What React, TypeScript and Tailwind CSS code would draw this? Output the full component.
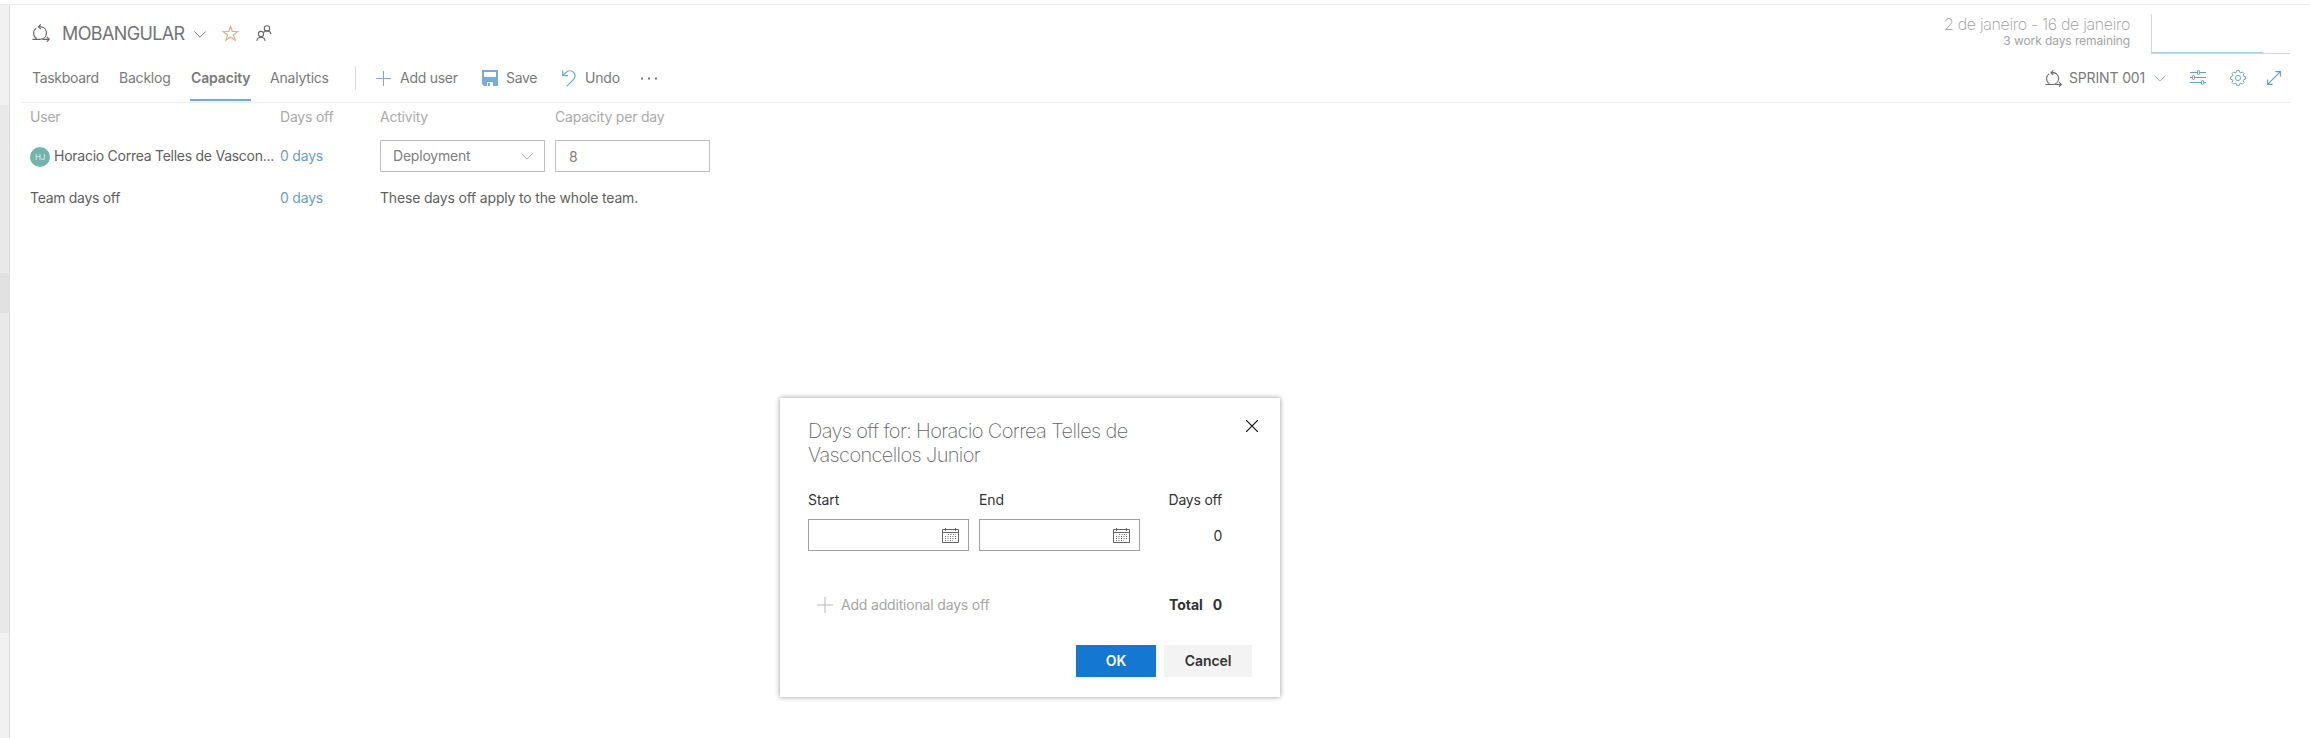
import React from "react";

type IconProps = { className?: string };

function SprintIcon({ className }: IconProps) {
  return (
    <svg viewBox="0 0 18 18" fill="none" stroke="currentColor" strokeWidth="1.15" className={className}>
      <path d="M0.5 15.3H8.5A6.3 6.3 0 0 0 9.2 2.8H6.6M4.6 14.6A6.3 6.3 0 0 1 4.3 4.1" />
      <path d="M8.8 0.4L6.4 2.8L8.8 5.2M10.5 15.3H17.2M14.8 12.9L17.2 15.3L14.8 17.7" />
    </svg>
  );
}

function Chevron({ className }: IconProps) {
  return (
    <svg viewBox="0 0 12 7" fill="none" stroke="currentColor" className={className}>
      <path d="M0.4 0.5L6 6.1L11.6 0.5" />
    </svg>
  );
}

function Star() {
  return (
    <svg viewBox="0 0 17 17" fill="none" stroke="currentColor" strokeWidth="1.2" className="size-[17px] text-[#e9ac88]">
      <path d="M8.5 1.2L10.3 6.5H16L11.4 9.8L13.1 15.2L8.5 11.9L3.9 15.2L5.6 9.8L1 6.5H6.7Z" />
    </svg>
  );
}

function People() {
  return (
    <svg viewBox="0 0 16 17" fill="none" stroke="currentColor" strokeWidth="1.1" className="h-[17px] w-4 text-[#666]">
      <circle cx="5" cy="9" r="2.6" />
      <circle cx="11" cy="3.4" r="2.7" />
      <path d="M0.8 15.8A4.2 4.2 0 0 1 9.1 15.8M7.8 7.4A4.1 4.1 0 0 1 15.1 9.2" />
    </svg>
  );
}

function Plus({ className }: IconProps) {
  return (
    <svg viewBox="0 0 16 16" fill="none" stroke="currentColor" className={className}>
      <path d="M8 0V16M0 8H16" />
    </svg>
  );
}

function SaveIcon() {
  return (
    <svg viewBox="0 0 16 16" className="size-4 text-[#78abdb]" fill="currentColor">
      <path fillRule="evenodd" d="M0 0H16V16H12V12H4V16H2L0 14ZM2 2V7H14V2Z" />
      <path d="M6 13H8V16H6ZM11 12H12V16H11ZM4 12H5V16H4Z" />
    </svg>
  );
}

function UndoIcon() {
  return (
    <svg viewBox="0 0 14 17" fill="none" stroke="currentColor" strokeWidth="1.2" className="h-[17px] w-3.5 text-[#6fa5d6]">
      <path d="M0.7 0.5V5.6H6M0.9 5.4L4.2 2.2C6.3 0.2 9.7 0.4 11.5 2.2C13.6 4.2 13.5 7.4 11.6 9.4L4.8 16.2" />
    </svg>
  );
}

function Sliders() {
  return (
    <svg viewBox="0 0 16 16" fill="none" stroke="currentColor" className="size-4 text-[#65a0d0]">
      <path d="M0 2.5H7.5M9.5 2.5H16M0 7.5H2.5M4.5 7.5H16M0 12.5H11.5M13.5 12.5H16" />
      <rect x="7.5" y="0.5" width="2" height="4" rx="0.7" />
      <rect x="2.5" y="5.5" width="2" height="4" rx="0.7" />
      <rect x="11.5" y="10.5" width="2" height="4" rx="0.7" />
    </svg>
  );
}

function Gear() {
  return (
    <svg viewBox="0 0 16 16" fill="none" stroke="currentColor" strokeLinejoin="round" className="size-4 text-[#72a7d3]">
      <circle cx="8" cy="8" r="2.6" />
      <path d="M6.7 0.6H9.3L9.6 2.3L10.9 2.9L12.4 1.9L14.1 3.6L13.1 5.1L13.7 6.4L15.4 6.7V9.3L13.7 9.6L13.1 10.9L14.1 12.4L12.4 14.1L10.9 13.1L9.6 13.7L9.3 15.4H6.7L6.4 13.7L5.1 13.1L3.6 14.1L1.9 12.4L2.9 10.9L2.3 9.6L0.6 9.3V6.7L2.3 6.4L2.9 5.1L1.9 3.6L3.6 1.9L5.1 2.9L6.4 2.3Z" />
    </svg>
  );
}

function Expand() {
  return (
    <svg viewBox="0 0 14 14" fill="none" stroke="currentColor" strokeWidth="1.1" className="size-3.5 text-[#5f9dcd]">
      <path d="M0.8 13.2L13.2 0.8M8.4 0.6H13.4V5.6M0.6 8.4V13.4H5.6" />
    </svg>
  );
}

function Calendar() {
  return (
    <svg viewBox="0 0 17 15" fill="none" stroke="currentColor" className="h-[15px] w-[17px] text-[#666]">
      <path d="M0.5 1.5H16.5V14.5H0.5ZM0.5 4.5H16.5M3.5 0V3M13.5 0V3" />
      <path d="M6 6.5H14M3 8.5H14M3 10.5H14M3 12.5H11" strokeDasharray="1 1.5" />
    </svg>
  );
}

function DateField({ label }: { label: string }) {
  return (
    <div className="w-[161px]">
      <div className="h-[29px] leading-5 tracking-[-0.05px]">{label}</div>
      <div className="flex h-8 items-center justify-end border border-[#a0a0a0] pr-[9px]">
        <Calendar />
      </div>
    </div>
  );
}

function DaysOffDialog() {
  return (
    <div
      role="dialog"
      className="absolute top-[398px] left-[780px] h-[299px] w-[500px] bg-white px-7 text-[#333] shadow-[0_0_5px_rgba(0,0,0,0.42)]"
    >
      <div className="flex h-[92px] justify-between pt-[21px]">
        <h2 className="w-[340px] text-[20px] leading-6 font-extralight tracking-[-0.63px] text-[#666]">
          Days off for: Horacio Correa Telles de Vasconcellos Junior
        </h2>
        <svg viewBox="0 0 12 12" stroke="#111" strokeWidth="1.2" className="mt-px mr-[-6px] size-3">
          <path d="M0 0L12 12M12 0L0 12" />
        </svg>
      </div>
      <div className="flex">
        <DateField label="Start" />
        <div className="w-2.5" />
        <DateField label="End" />
        <div className="flex flex-1 flex-col items-end pr-[30px] leading-5">
          <span>Days off</span>
          <span className="mt-4">0</span>
        </div>
      </div>
      <div className="mt-11 flex h-5 items-center leading-5">
        <Plus className="ml-[9px] size-4 text-[#b8b8b8]" />
        <span className="ml-2 tracking-[-0.18px] text-[#a6a6a6]">Add additional days off</span>
        <span className="ml-auto font-bold tracking-[-0.02px]">Total</span>
        <span className="ml-2.5 pr-[30px] font-bold">0</span>
      </div>
      <div className="mt-[30px] flex justify-end gap-2 leading-5 font-semibold tracking-[-0.1px]">
        <button className="h-8 w-20 bg-[#1478d2] pb-px text-white">OK</button>
        <button className="h-8 w-[88px] bg-[#f3f3f3] pb-px">Cancel</button>
      </div>
    </div>
  );
}

export default function App() {
  return (
    <div className="relative flex h-[738px] w-[2310px] flex-col overflow-hidden bg-white pt-1 font-['Inter','Liberation_Sans',sans-serif] text-[14px] tracking-[-0.21px] text-[#737373]">
      <div className="h-px shrink-0 bg-[#ececec]" />
      <div className="flex flex-1">
        <aside className="flex w-2.5 shrink-0 flex-col border-r border-[#dedede] bg-[#f1f1f1]">
          <div className="h-[100px]" />
          <div className="h-[168px] bg-[#e9e9e9]" />
          <div className="h-10 rounded-r-xs bg-[#e1e1e1]" />
          <div className="h-80 bg-[#e9e9e9]" />
        </aside>

        <main className="flex-1 pr-5 pl-3">
          <header className="flex h-[55px]">
            <div className="flex h-14 items-center pl-2.5">
              <SprintIcon className="size-[18px] text-[#666]" />
              <h1 className="ml-3 w-[125px] pt-0.5 text-[18px] leading-6 tracking-[-0.62px]">MOBANGULAR</h1>
              <Chevron className="mt-[3px] ml-[7px] h-[7px] w-3 text-[#777]" />
              <div className="ml-4">
                <Star />
              </div>
              <div className="ml-[17px]">
                <People />
              </div>
            </div>
            <div className="ml-auto pt-[9px] text-right">
              <div className="h-[18px] text-[16px] leading-5 font-extralight tracking-[-0.31px] text-[#999]">2 de janeiro - 16 de janeiro</div>
              <div className="text-[12px] leading-[18px] tracking-[-0.09px] text-[#a3a3a3]">3 work days remaining</div>
            </div>
            <div className="mt-[9px] ml-[21px] flex h-10 w-[139px] items-end border-b border-l border-[#d6d6d6]">
              <div className="h-px w-[111px] bg-[#a6d0f3]" />
            </div>
          </header>

          <nav className="flex h-[43px] items-center border-b border-[#ececec] pb-1.5 leading-5 text-[#7a7a7a]">
            <span className="ml-2.5 w-[87px] tracking-[-0.3px]">Taskboard</span>
            <span className="w-[71px]">Backlog</span>
            <span className="relative w-[61px] pl-px font-semibold tracking-[-0.15px]">
              Capacity
              <span className="absolute top-[31px] left-0 h-0.5 w-[61px] bg-[#6aaee4]" />
            </span>
            <span className="ml-[19px]">Analytics</span>
            <span className="absolute top-[66px] left-[355px] h-6 w-px bg-[#dcdcdc]" />
            <span className="absolute top-[70px] left-[376px] flex h-4 items-center">
              <Plus className="size-[15px] text-[#6fa5d6]" />
              <span className="ml-[9px] w-[82px] tracking-[-0.26px]">Add user</span>
              <SaveIcon />
              <span className="ml-2 w-14 tracking-[-0.35px]">Save</span>
              <UndoIcon />
              <span className="ml-[9px] w-[55px]">Undo</span>
              <svg viewBox="0 0 18 3" className="h-[3px] w-[18px]" fill="#777">
                <path d="M1 .5h2v2H1zM8 .5h2v2H8zM15 .5h2v2h-2z" />
              </svg>
            </span>
            <div className="mr-[9px] ml-auto flex items-center">
              <SprintIcon className="size-[17px] text-[#666]" />
              <span className="ml-[7px] w-[85px] tracking-[-0.15px]">SPRINT 001</span>
              <Chevron className="h-[7px] w-3 text-[#aaa]" />
              <span className="ml-6">
                <Sliders />
              </span>
              <span className="ml-6">
                <Gear />
              </span>
              <span className="ml-[21px]">
                <Expand />
              </span>
            </div>
          </nav>

          <section className="pl-2 leading-5 text-[#5f5f5f]">
            <div className="grid h-[37px] grid-cols-[250px_100px_175px_1fr] pt-1 text-[#aaa]">
              <span>User</span>
              <span>Days off</span>
              <span>Activity</span>
              <span>Capacity per day</span>
            </div>
            <div className="grid h-8 grid-cols-[250px_100px_175px_1fr] items-center">
              <div className="flex items-center">
                <span className="mt-0.5 flex size-5 items-center justify-center rounded-full bg-[#72b5aa] text-[8px] leading-none font-light text-white">HJ</span>
                <span className="ml-1 w-[222px] tracking-[-0.26px] whitespace-nowrap">Horacio Correa Telles de Vascon...</span>
              </div>
              <span className="text-[#6a9dcb]">0 days</span>
              <div className="flex h-8 w-[165px] items-center justify-between border border-[#c2c2c2] pr-[11px] pl-3 text-[#808080]">
                Deployment
                <Chevron className="h-[7px] w-3 text-[#aaa]" />
              </div>
              <div className="flex h-8 w-[155px] items-center border border-[#c2c2c2] pt-0.5 pl-[13px] text-[#808080]">8</div>
            </div>
            <div className="grid grid-cols-[250px_100px_1fr] pt-4">
              <span className="tracking-[-0.3px]">Team days off</span>
              <span className="text-[#6a9dcb]">0 days</span>
              <span className="tracking-[-0.18px]">These days off apply to the whole team.</span>
            </div>
          </section>
        </main>
      </div>
      <DaysOffDialog />
    </div>
  );
}
